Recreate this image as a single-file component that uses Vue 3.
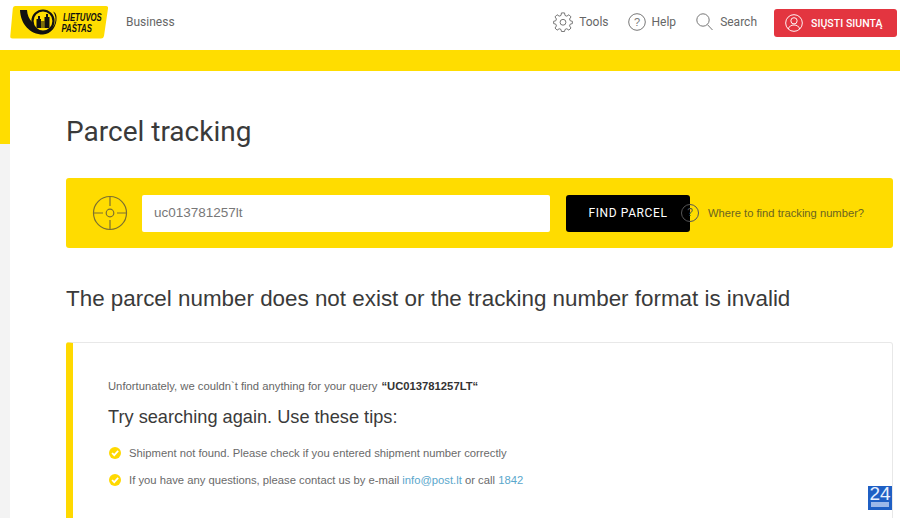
<script setup>
const tips = [
  { id: 1, parts: 'Shipment not found. Please check if you entered shipment number correctly' },
]
</script>

<template>
  <div class="page">
    <header class="topbar">
      <div class="brand">
        <svg class="logo" width="99" height="33" viewBox="0 0 99 33">
          <path d="M5 0H96Q98.500 0 98 2.500L94 30Q93.500 32.500 91 32.500H2.500Q0 32.500 0.300 30L2.800 2.500Q3 0 5 0Z" fill="#ffdd00"/>
          <path d="M10 4H17C17.300 9 19 13 22 16C23 22 28 25 33 25C40 25 45 21 45.500 14C45.700 10 44.500 7.500 43 5.500C44.800 6 46.300 8 46.500 11C47.300 20 41 28.500 33 28.500C20 28.500 10.500 18 10 4Z" fill="#111"/>
          <circle cx="33" cy="15" r="10.500" fill="#ffdd00" stroke="#111" stroke-width="2.200"/>
          <path d="M26.500 22V13H28V10H30V13H31V22ZM34.500 22V11H36V8H38V11H39.500V22Z" fill="#111"/>
          <path d="M31 22V15H34.500V22Z" fill="#111" opacity=".55"/>
          <text transform="translate(53,15) scale(.74,1)" class="logo-text">LIETUVOS</text>
          <text transform="translate(51.500,25.500) scale(.74,1)" class="logo-text">PAŠTAS</text>
        </svg>
        <a class="business">Business</a>
      </div>
      <nav class="nav">
        <a class="nav-item tools">
          <svg width="20" height="20" viewBox="0 0 22 22" fill="none" stroke="#777" stroke-width="1.100">
            <path d="M9.300 1H12.700L13.200 3.800L15.200 4.600L17.500 3L19.800 5.400L18.200 7.700L19 9.700L21.300 10.200V12.800L19 13.300L18.200 15.300L19.800 17.600L17.500 20L15.200 18.400L13.200 19.200L12.700 21.500H9.300L8.800 19.200L6.800 18.400L4.500 20L2.200 17.600L3.800 15.300L3 13.300L0.700 12.800V10.200L3 9.700L3.800 7.700L2.200 5.400L4.500 3L6.800 4.600L8.800 3.800Z" stroke-linejoin="round"/>
            <circle cx="11" cy="11.300" r="3.200"/>
          </svg>
          <span>Tools</span>
        </a>
        <a class="nav-item help">
          <svg width="18" height="18" viewBox="0 0 18 18" fill="none">
            <circle cx="9" cy="9" r="8.300" stroke="#777"/>
            <text x="9" y="13" text-anchor="middle" class="q">?</text>
          </svg>
          <span>Help</span>
        </a>
        <a class="nav-item search">
          <svg width="17" height="18" viewBox="0 0 17 18" fill="none">
            <circle cx="7" cy="7" r="6.200" stroke="#777"/>
            <path d="M11.500 11.700L16.500 17" stroke="#777"/>
          </svg>
          <span>Search</span>
        </a>
        <a class="send">
          <svg width="18" height="18" viewBox="0 0 19 19" fill="none" stroke="#fff" stroke-width="1">
            <circle cx="9.500" cy="9.500" r="8.800"/>
            <circle cx="9.500" cy="7.200" r="3.300"/>
            <path d="M3.500 15.800C4.500 12.800 6.500 11.600 9.500 11.600C12.500 11.600 14.500 12.800 15.500 15.800"/>
          </svg>
          <span>SIŲSTI SIUNTĄ</span>
        </a>
      </nav>
    </header>

    <div class="stage">
      <main class="content">
        <h1>Parcel tracking</h1>

        <section class="search-box">
          <svg class="target" width="36" height="36" viewBox="0 0 36 36" fill="none" stroke="#7c7030" stroke-width="1.200">
            <circle cx="18" cy="18" r="16.500"/>
            <circle cx="18" cy="18" r="3.800"/>
            <path d="M18 1V11M18 25V35M1 18H11M25 18H35"/>
          </svg>
          <div class="input">uc013781257lt</div>
          <button class="find">FIND PARCEL</button>
          <span class="where-icon">?</span>
          <a class="where">Where to find tracking number?</a>
        </section>

        <h2>The parcel number does not exist or the tracking number format is invalid</h2>

        <section class="result">
          <p class="lead">Unfortunately, we couldn`t find anything for your query <strong>“UC013781257LT“</strong></p>
          <h3>Try searching again. Use these tips:</h3>
          <ul>
            <li v-for="t in tips" :key="t.id">
              <svg class="check" width="12" height="12" viewBox="0 0 11 11">
                <circle cx="5.500" cy="5.500" r="5.500" fill="#ffd900"/>
                <path d="M2.800 5.500L4.800 7.500L8.400 3.600" fill="none" stroke="#fff" stroke-width="1.600"/>
              </svg>
              <span>{{ t.parts }}</span>
            </li>
            <li>
              <svg class="check" width="12" height="12" viewBox="0 0 11 11">
                <circle cx="5.500" cy="5.500" r="5.500" fill="#ffd900"/>
                <path d="M2.800 5.500L4.800 7.500L8.400 3.600" fill="none" stroke="#fff" stroke-width="1.600"/>
              </svg>
              <span>If you have any questions, please contact us by e-mail <a>info@post.lt</a> or call <a>1842</a></span>
            </li>
          </ul>
        </section>
      </main>
    </div>
    <div class="badge"><span>24</span><i></i></div>
  </div>
</template>

<style scoped>
.page {
  position: relative;
  width: 900px;
  height: 518px;
  overflow: hidden;
  background: #fff;
  font-family: "Liberation Sans", Arial, sans-serif;
}
.topbar {
  height: 50px;
  box-sizing: border-box;
  display: flex;
  justify-content: space-between;
  padding: 6px 3px 0 10px;
}
.brand { display: flex; align-items: flex-start; }
.logo { display: block; }
.logo-text { font: italic 700 10.500px "Liberation Sans", sans-serif; fill: #111; }
.business { margin: 9px 0 0 17px; font: 400 12px/14px Roboto, sans-serif; color: #666; }
.nav { display: flex; align-items: flex-start; }
.nav-item { display: flex; align-items: center; height: 22px; margin-top: 5px; font: 400 12px Roboto, sans-serif; color: #666; }
.tools { gap: 6px; margin-right: 19px; }
.help { gap: 6px; margin-right: 20px; }
.search { gap: 7px; margin-right: 17px; }
.send {
  display: flex; align-items: center; gap: 8px;
  width: 123px; height: 28px; margin-top: 3px; padding-left: 11px; box-sizing: border-box;
  background: #e33540; border-radius: 3px; color: #fff;
  font: 500 10.500px Roboto, sans-serif; letter-spacing: .05px;
}
.stage {
  height: 468px;
  background: linear-gradient(#ffdd00 0 94px, #f3f3f3 94px);
  padding-top: 21px;
  box-sizing: border-box;
  padding-left: 10px;
}
.content {
  background: #fff;
  height: 447px;
  padding: 44px 7px 0 56px;
  box-sizing: border-box;
}
h1 { margin: 0; font: 400 28px/34px Roboto, sans-serif; color: #3a3a3a; }
.search-box {
  display: flex; align-items: center;
  height: 70px; margin-top: 29px;
  background: #ffdc00; border-radius: 3px;
  padding-left: 26px;
}
.target { flex: none; }
.input {
  width: 408px; height: 37px; margin-left: 14px; padding-left: 12px; box-sizing: border-box;
  background: #fff; border-radius: 2px;
  font: 400 13.500px/36px "Liberation Sans", sans-serif; color: #777;
}
.find {
  width: 124px; height: 37px; margin-left: 16px; padding: 0; border: 0; border-radius: 3px;
  background: #000; color: #fff; font: 400 12px Roboto, sans-serif; letter-spacing: .6px;
}
.where-icon {
  width: 18px; height: 18px; margin-left: -9px; box-sizing: border-box;
  border: 1px solid #555; border-radius: 50%; text-align: center;
  font: 400 10px/16px "Liberation Sans", sans-serif; color: #555;
}
.where { margin-left: 9px; font: 400 11.200px "Liberation Sans", sans-serif; color: #6b6420; }
h2 { margin: 37px 0 0; font: 400 22.400px/27px "Liberation Sans", sans-serif; color: #3a3a3a; }
.result {
  height: 200px; margin-top: 30px; box-sizing: border-box;
  border: 1px solid #e8e8e8; border-left: 7px solid #ffd900; border-radius: 3px 3px 0 0;
  padding: 36px 0 0 35px;
}
.lead { margin: 0; font: 400 11.250px/14px "Liberation Sans", sans-serif; color: #666; }
.lead strong { margin-left: 1px; color: #333; }
h3 { margin: 13px 0 0; font: 400 18.200px/22px "Liberation Sans", sans-serif; color: #3a3a3a; }
ul { list-style: none; margin: 17px 0 0 1px; padding: 0; }
li { display: flex; align-items: center; gap: 8px; height: 16px; margin-bottom: 11px; font: 400 11.250px/16px "Liberation Sans", sans-serif; color: #6a6a6a; }
li a { color: #5aa7cc; }
.badge {
  position: absolute; left: 868px; top: 486px; width: 24px; height: 24px;
  background: #1f5fc4; color: #e8f0ff; text-align: center;
  font: 400 19px/16px "Liberation Sans", sans-serif;
}
.badge span { display: block; }
.badge i { display: block; width: 18px; height: 5px; margin: 0 auto; background: #9db8e8; }
.q { font: 400 11px "Liberation Sans", sans-serif; fill: #777; }
</style>
